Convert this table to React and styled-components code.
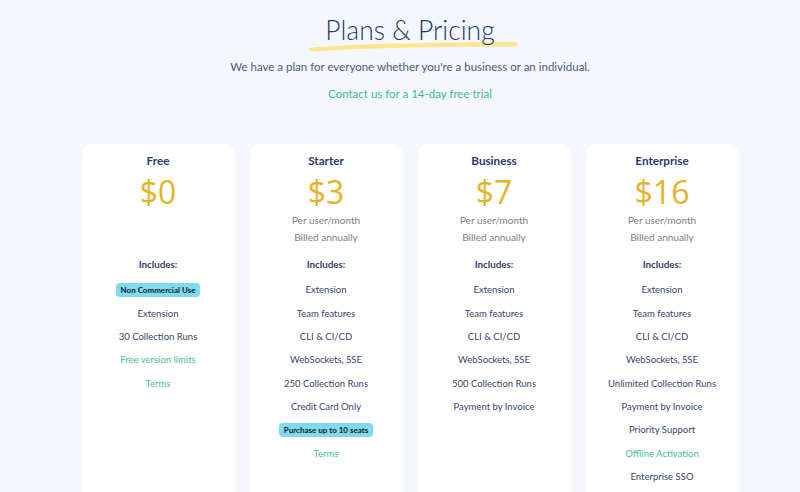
import React from 'react'
import styled, { createGlobalStyle } from 'styled-components'

const Global = createGlobalStyle`
  html, body {
    margin: 0;
    background: #f4f7fd;
    font-family: Lato, "Open Sans", sans-serif;
    overflow: hidden;
  }
`

const Page = styled.div`
  padding: 10px 0 0 20px;
  display: flex;
  flex-direction: column;
  align-items: center;
`

const TitleWrap = styled.div`
  position: relative;
  display: flex;
  justify-content: center;
`

const Title = styled.h1`
  margin: 0;
  font-size: 26.5px;
  line-height: 40px;
  font-weight: 300;
  color: #1f3b6f;
  position: relative;
  z-index: 1;
`

const Brush = styled.svg`
  position: absolute;
  left: -17px;
  right: -23px;
  top: 31px;
  height: 10px;
`

const Subtitle = styled.p`
  margin: 9px 0 0;
  font-size: 11.5px;
  line-height: 16px;
  color: #4d5b78;
`

const Contact = styled.a`
  margin-top: 11px;
  font-size: 11.5px;
  line-height: 16px;
  color: #3dbb8f;
  text-decoration: none;
`

const Cards = styled.div`
  margin-top: 42px;
  display: flex;
  gap: 15px;
`

const Card = styled.div`
  width: 153px;
  height: 400px;
  background: #fff;
  border-radius: 10px;
  display: flex;
  flex-direction: column;
  align-items: center;
  padding-top: 8px;
`

const Name = styled.div`
  font-weight: 700;
  font-size: 11.7px;
  line-height: 16px;
  color: #1f3b6f;
`

const Price = styled.div`
  font-family: "Open Sans", sans-serif;
  font-size: 32px;
  color: #e3b428;
  line-height: 40px;
  margin-top: 4px;
`

const Note = styled.div`
  font-size: 10px;
  color: #7a7f88;
  line-height: 17px;
`

const Notes = styled.div`
  height: 34px;
  display: flex;
  flex-direction: column;
  align-items: center;
`

const Includes = styled.div`
  font-weight: 700;
  font-size: 9.8px;
  line-height: 14px;
  color: #2f4470;
  margin-top: 11px;
  margin-bottom: 7px;
`

const Item = styled.div`
  font-size: 9.5px;
  color: ${p => (p.$link ? '#47c095' : '#34456d')};
  display: flex;
  align-items: center;
  height: 23.35px;
`

const Badge = styled.span`
  background: #7fd9ef;
  color: #0e1b2c;
  font-weight: 700;
  font-size: 8px;
  line-height: 14px;
  padding: 0 5px;
  border-radius: 4px;
`

const plans = [
  {
    name: 'Free',
    price: '$0',
    notes: [],
    items: [
      { badge: 'Non Commercial Use' },
      { text: 'Extension' },
      { text: '30 Collection Runs' },
      { text: 'Free version limits', link: true },
      { text: 'Terms', link: true },
    ],
  },
  {
    name: 'Starter',
    price: '$3',
    notes: ['Per user/month', 'Billed annually'],
    items: [
      { text: 'Extension' },
      { text: 'Team features' },
      { text: 'CLI & CI/CD' },
      { text: 'WebSockets, SSE' },
      { text: '250 Collection Runs' },
      { text: 'Credit Card Only' },
      { badge: 'Purchase up to 10 seats' },
      { text: 'Terms', link: true },
    ],
  },
  {
    name: 'Business',
    price: '$7',
    notes: ['Per user/month', 'Billed annually'],
    items: [
      { text: 'Extension' },
      { text: 'Team features' },
      { text: 'CLI & CI/CD' },
      { text: 'WebSockets, SSE' },
      { text: '500 Collection Runs' },
      { text: 'Payment by Invoice' },
    ],
  },
  {
    name: 'Enterprise',
    price: '$16',
    notes: ['Per user/month', 'Billed annually'],
    items: [
      { text: 'Extension' },
      { text: 'Team features' },
      { text: 'CLI & CI/CD' },
      { text: 'WebSockets, SSE' },
      { text: 'Unlimited Collection Runs' },
      { text: 'Payment by Invoice' },
      { text: 'Priority Support' },
      { text: 'Offline Activation', link: true },
      { text: 'Enterprise SSO' },
    ],
  },
]

export default function App() {
  return (
    <>
      <Global />
      <Page>
        <TitleWrap>
          <Title>Plans &amp; Pricing</Title>
          <Brush viewBox="0 0 210 10" preserveAspectRatio="none">
            <path
              d="M2 8 C 30 5, 90 2.5, 208 2 L 208 4.5 C 120 4.5, 50 6.5, 3 9.5 Z"
              fill="#fde58f"
              stroke="#fde58f"
              strokeWidth="2"
              strokeLinejoin="round"
            />
          </Brush>
        </TitleWrap>
        <Subtitle>We have a plan for everyone whether you're a business or an individual.</Subtitle>
        <Contact href="#">Contact us for a 14-day free trial</Contact>
        <Cards>
          {plans.map(p => (
            <Card key={p.name}>
              <Name>{p.name}</Name>
              <Price>{p.price}</Price>
              <Notes>
                {p.notes.map(n => (
                  <Note key={n}>{n}</Note>
                ))}
              </Notes>
              <Includes>Includes:</Includes>
              {p.items.map((it, i) => (
                <Item key={i} $link={it.link}>
                  {it.badge ? <Badge>{it.badge}</Badge> : it.text}
                </Item>
              ))}
            </Card>
          ))}
        </Cards>
      </Page>
    </>
  )
}
